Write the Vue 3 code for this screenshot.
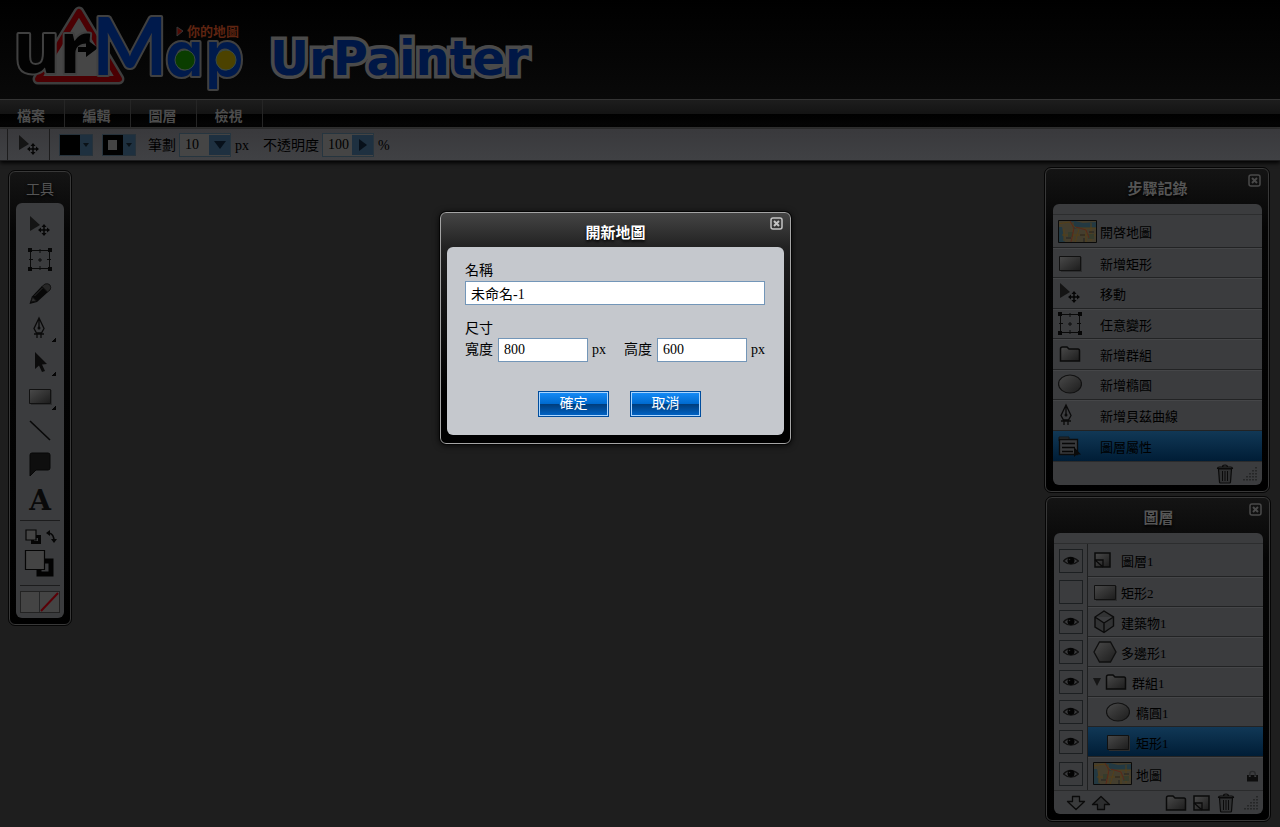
<script setup>
import { ref } from 'vue'

const menus = ['檔案', '編輯', '圖層', '檢視']

const tools = [
  { id: 'move', name: '移動' },
  { id: 'transform', name: '任意變形' },
  { id: 'pencil', name: '鉛筆' },
  { id: 'pen', name: '貝茲曲線', more: true },
  { id: 'arrow', name: '選取', more: true },
  { id: 'rect', name: '矩形', more: true },
  { id: 'line', name: '直線' },
  { id: 'bubble', name: '註解' },
  { id: 'letter', name: '文字' }
]

const steps = [
  { icon: 'map', text: '開啓地圖' },
  { icon: 'rect', text: '新增矩形' },
  { icon: 'move', text: '移動' },
  { icon: 'transform', text: '任意變形' },
  { icon: 'folder', text: '新增群組' },
  { icon: 'ellipse', text: '新增橢圓' },
  { icon: 'pen', text: '新增貝茲曲線' },
  { icon: 'props', text: '圖層屬性' }
]

const layers = ref([
  { icon: 'page', text: '圖層1', visible: true },
  { icon: 'rect', text: '矩形2', visible: false },
  { icon: 'cube', text: '建築物1', visible: true },
  { icon: 'hexagon', text: '多邊形1', visible: true },
  { icon: 'folder', text: '群組1', visible: true, kind: 'group' },
  { icon: 'ellipse', text: '橢圓1', visible: true, kind: 'child' },
  { icon: 'rect', text: '矩形1', visible: true, kind: 'child' },
  { icon: 'map', text: '地圖', visible: true, kind: 'base' }
])

const activeStep = ref(7)
const activeLayer = ref(6)
const stroke = ref('10')
const opacity = ref('100')
const mapName = ref('未命名-1')
const mapWidth = ref('800')
const mapHeight = ref('600')
</script>

<template>
  <div class="app">
    <svg class="defs" aria-hidden="true">
      <defs>
        <linearGradient id="shade" x1="0" y1="0" x2="1" y2="1">
          <stop offset="0" stop-color="#4a4a4a" />
          <stop offset="1" stop-color="#1c1c1c" />
        </linearGradient>
        <symbol id="i-move" viewBox="0 0 24 24">
          <path d="M2 2 L2 17 L12 11 Z" fill="#141414" />
          <path d="M16 11v10M11 16h10" stroke="#060606" stroke-width="1.5" />
          <path d="M16 10l-2.500 3h5zM16 22l-2.500-3h5zM10 16l3-2.500v5zM22 16l-3-2.500v5z" fill="#060606" />
        </symbol>
        <symbol id="i-transform" viewBox="0 0 24 24">
          <path d="M2.500 2.500h19v18h-19zM12 1v4M12 18v4M1 11.500h4M19 11.500h4M12 10v4M10 12h4" fill="none" stroke="#0a0a0a" />
          <path d="M0 0h4v4H0zM20 0h4v4h-4zM0 19h4v4H0zM20 19h4v4h-4z" fill="#060606" />
        </symbol>
        <symbol id="i-pencil" viewBox="0 0 24 24">
          <path d="M1.500 22 L4 14.500 L14 4 L20 10 L9 20 Z" fill="#070707" />
          <path d="M14 4.500 L17 2 Q20 1 22 3 Q23.500 6 22 8 L19.500 10 Z" fill="#262626" stroke="#111" />
          <path d="M3 20 L4.500 15 L8.500 19 Z" fill="#2c2c2c" stroke="#101010" />
          <path d="M6.500 14 L14.500 6" stroke="#2a2a2a" />
        </symbol>
        <symbol id="i-pen" viewBox="0 0 24 24">
          <path d="M11 2 L6 12.500 L8.500 17 h5 L16 12.500 Z M11 2 V11 M6 18h10 M9 17v5 M13 17v5" fill="none" stroke="#0a0a0a" stroke-width="1.300" />
          <circle cx="11" cy="12" r="1.500" fill="#0a0a0a" />
        </symbol>
        <symbol id="i-arrow" viewBox="0 0 24 24">
          <path d="M7 2 L7 19 L11 15.500 L14 22 L17 21 L14 14.500 L19 14 Z" fill="#0b0b0b" />
        </symbol>
        <symbol id="i-rect" viewBox="0 0 24 24">
          <path d="M3 6h21v15H3z" fill="#2c2d2e" />
          <path d="M1.500 5.500h21v14h-21z" fill="url(#shade)" stroke="#111" />
        </symbol>
        <symbol id="i-line" viewBox="0 0 24 24">
          <path d="M2 3 L22 22" stroke="#080808" stroke-width="1.600" />
        </symbol>
        <symbol id="i-bubble" viewBox="0 0 24 24">
          <path d="M4 1H20Q22 1 22 3V16Q22 18 20 18H8L2 24V3Q2 1 4 1Z" fill="#0e0e0e" stroke="#070707" />
        </symbol>
        <symbol id="i-letter" viewBox="0 0 24 24">
          <text x="12" y="24" text-anchor="middle" font-family="DejaVu Serif" font-weight="700" font-size="28" fill="#090909">A</text>
        </symbol>
        <symbol id="i-folder" viewBox="0 0 24 24">
          <path d="M2.500 19V7Q2.500 5 4.500 5H9L11 7H20Q21.500 7 21.500 9V19Z" fill="url(#shade)" stroke="#0a0a0a" stroke-width="1.500" />
        </symbol>
        <symbol id="i-ellipse" viewBox="0 0 24 24">
          <ellipse cx="12" cy="12" rx="11.500" ry="9" fill="url(#shade)" stroke="#111" stroke-width="1.200" />
        </symbol>
        <symbol id="i-props" viewBox="0 0 24 24">
          <path d="M1 3h10v4H1z" fill="#2a2c2e" stroke="#15181a" />
          <path d="M1.500 5.500h18v15h-18z" fill="#393a3c" stroke="#0c0c0c" stroke-width="1.300" />
          <path d="M4 9.500h13M4 13.500h13M4 17.500h11" stroke="#070707" stroke-width="1.600" />
          <path d="M16 13v10l2.500-2.500H23z" fill="#0a0a0a" />
        </symbol>
        <symbol id="i-page" viewBox="0 0 24 24">
          <path d="M2 5h15v14H2z" fill="url(#shade)" stroke="#0a0a0a" stroke-width="1.500" />
          <path d="M2 12h8v7M2 12l8 7" fill="none" stroke="#0a0a0a" stroke-width="1.300" />
        </symbol>
        <symbol id="i-cube" viewBox="0 0 24 24">
          <path d="M11 1 L20.500 7 V16 L11 22.500 L2 17 V7 Z M2 7 L11 13 L20.500 7 M11 13 V22" fill="#323334" stroke="#0b0b0b" stroke-width="1.400" />
        </symbol>
        <symbol id="i-hexagon" viewBox="0 0 24 24">
          <path d="M6.500 2 H17.500 L23 12 L17.500 22 H6.500 L1 12 Z" fill="url(#shade)" stroke="#0f0f0f" stroke-width="1.300" />
        </symbol>
        <symbol id="i-map" viewBox="0 0 39 23">
          <path d="M0 0h39v23H0z" fill="#443e2e" />
          <path d="M0 7h4l3 16H0zM13 0l12 3 14-1v6H24l-9 1z" fill="#233942" />
          <path d="M0 4l11-2 7 6h21M15 2v19M21 9l-4 14M6 9v12M28 9v14M33 3v18M4 15h34" stroke="#554019" fill="none" />
          <path d="M10 12h5v5h-5zM30 14h6v5h-6z" fill="#363c2c" />
          <path d="M12 1l4 7-3 14M18 7l10 3 3 8" stroke="#5a281b" fill="none" />
          <path d="M8 18h5M22 15h5M26 18v4M31 12h5" stroke="#222" />
          <path d="M.5.5h38v22H.5z" fill="none" stroke="#0a0a0a" />
        </symbol>
        <symbol id="i-eye" viewBox="0 0 16 12">
          <path d="M.5 6 Q7-1 15.500 6 Q8 12.500 .5 6Z" fill="#3c3d3f" stroke="#101010" stroke-width="1.200" />
          <circle cx="8" cy="5.500" r="3.500" fill="#030303" />
          <circle cx="6.500" cy="4.500" r=".8" fill="#2c2c2c" />
        </symbol>
        <symbol id="i-trash" viewBox="0 0 18 20">
          <path d="M2.500 5h13l-1 13q0 1-1 1h-9q-1 0-1-1z" fill="#303132" stroke="#0a0a0a" stroke-width="1.200" />
          <path d="M6.500 7v10M9 7v10M11.500 7v10" stroke="#0a0a0a" />
          <path d="M1.500 4.500q0-1.500 2-1.500h11q2 0 2 1.500zM6.500 3q0-2 2.500-2t2.500 2" fill="#353637" stroke="#0a0a0a" stroke-width="1.200" />
        </symbol>
        <symbol id="i-down" viewBox="0 0 20 16">
          <path d="M6.500 1.500h7v5H18.500l-8.500 8-8.500-8h5z" fill="#3a3b3c" stroke="#0a0a0a" stroke-width="1.300" stroke-linejoin="round" />
        </symbol>
        <symbol id="i-up" viewBox="0 0 20 16">
          <path d="M6.500 14.500h7v-5H18.500l-8.500-8-8.500 8h5z" fill="#2d2e2f" stroke="#0a0a0a" stroke-width="1.300" stroke-linejoin="round" />
        </symbol>
        <symbol id="i-grip" viewBox="0 0 15 15">
          <path d="M13 1v14M10 4v11M7 7v8M4 10v5M1 13v2" stroke="#202122" stroke-width="1.500" stroke-dasharray="1.500 1.500" />
        </symbol>
        <symbol id="i-lock" viewBox="0 0 12 14">
          <path d="M3 7V5q0-3 3-3t3 3v2" fill="none" stroke="#292a2b" stroke-width="1.500" />
          <path d="M0 6h2v2h2V6h4v2h2V6h2v7H0z" fill="#0d0d0d" />
        </symbol>
        <symbol id="i-close" viewBox="0 0 13 13">
          <rect x="1" y="1" width="11" height="11" rx="2" fill="none" stroke="currentColor" stroke-width="1.500" />
          <path d="M4 4l5 5M9 4l-5 5" stroke="currentColor" stroke-width="2" />
        </symbol>
      </defs>
    </svg>

    <header class="brand">
      <svg class="logo" viewBox="0 0 250 98" width="250" height="98" role="img" aria-label="urMap 你的地圖">
        <g stroke-linejoin="round">
          <path d="M79 11 L119 78 H38 Z" fill="#464646" stroke="#3d3d3d" stroke-width="11" />
          <path d="M79 11 L119 78 H38 Z" fill="#464646" stroke="#4b0003" stroke-width="6" />
          <g class="edge" fill="#020202">
            <text class="ur" x="13" y="72" font-size="72">u</text>
            <text class="ur" x="59" y="72" font-size="72">r</text>
          </g>
          <path d="M78 46 H86 V38 L98 47 L86 56 V51 H78 Z" fill="#020202" />
          <g class="edge" fill="#001a4c">
            <text x="92" y="74" font-family="Lato" font-weight="700" font-size="80">M</text>
            <text class="round" x="165" y="75" font-size="62">a</text>
            <text class="round" x="205" y="75" font-size="62">p</text>
          </g>
          <circle cx="185" cy="59" r="10" fill="#0a3d00" stroke="#394a40" />
          <circle cx="226" cy="59" r="10" fill="#4c4200" stroke="#394a40" />
          <path d="M177 26 L183 30 L177 35 Z" fill="#510b05" stroke="#363636" />
          <text class="slogan" x="187" y="35" font-size="13">你的地圖</text>
        </g>
      </svg>
      <h1>UrPainter</h1>
    </header>

    <nav class="menubar">
      <button v-for="m in menus" :key="m" type="button">{{ m }}</button>
    </nav>

    <div class="options">
      <button class="current" type="button" aria-label="移動"><svg width="24" height="24"><use href="#i-move" /></svg></button>
      <button class="swatch fill" type="button" aria-label="填色"><i></i><b></b></button>
      <button class="swatch line" type="button" aria-label="線條色"><i></i><b></b></button>
      <label for="stroke">筆劃</label>
      <span class="combo">
        <input id="stroke" v-model="stroke" type="text">
        <button type="button" aria-label="筆劃寬度"><svg width="12" height="8"><path d="M0 0h12L6 8z" /></svg></button>
      </span>
      <span class="unit">px</span>
      <label for="opacity" class="second">不透明度</label>
      <span class="combo">
        <input id="opacity" v-model="opacity" type="text">
        <button type="button" aria-label="調整不透明度"><svg width="8" height="12"><path d="M0 0l8 6-8 6z" /></svg></button>
      </span>
      <span class="unit">%</span>
    </div>

    <main class="workspace">
      <aside class="panel toolbox">
        <h2>工具</h2>
        <div class="body">
          <button v-for="t in tools" :key="t.id" class="tool" type="button" :aria-label="t.name">
            <svg width="24" height="24"><use :href="'#i-' + t.id" /></svg>
            <i v-if="t.more" class="more"></i>
          </button>
          <div class="colors">
            <svg width="36" height="52" viewBox="0 0 36 52" role="img" aria-label="顏色">
              <path d="M8.500 8.500h7v6h-7z" fill="none" stroke="#050505" stroke-width="3" />
              <path d="M2 2h10v10H2z" fill="#444" stroke="#050505" stroke-width="1.200" />
              <path d="M25 5q5 1 5 8" fill="none" stroke="#060606" stroke-width="1.500" />
              <path d="M22 5l4-3v6zM27 11h6l-3 4z" fill="#060606" />
              <path d="M15 33h12v13H15z" fill="none" stroke="#020202" stroke-width="5" />
              <path d="M1.500 22.500h19v19h-19z" fill="#444" stroke="#050505" stroke-width="1.200" />
            </svg>
          </div>
          <div class="modes">
            <button type="button" aria-label="單色"></button>
            <button type="button" aria-label="無色"><svg width="19" height="20"><path d="M1 19L18 1" stroke="#5a0007" stroke-width="2" /></svg></button>
          </div>
        </div>
      </aside>

      <div class="side">
        <section class="panel history">
          <h2>步驟記錄</h2>
          <button class="close" type="button" aria-label="關閉步驟記錄"><svg width="13" height="13"><use href="#i-close" /></svg></button>
          <div class="body">
            <ul class="list">
              <li v-for="(s, i) in steps" :key="s.text">
                <button class="row" :class="{ active: i === activeStep }" type="button" @click="activeStep = i">
                  <svg :class="s.icon"><use :href="'#i-' + s.icon" /></svg>
                  <span>{{ s.text }}</span>
                </button>
              </li>
            </ul>
            <footer>
              <button type="button" aria-label="刪除步驟"><svg width="18" height="20"><use href="#i-trash" /></svg></button>
              <svg class="grip" width="15" height="15"><use href="#i-grip" /></svg>
            </footer>
          </div>
        </section>

        <section class="panel layers">
          <h2>圖層</h2>
          <button class="close" type="button" aria-label="關閉圖層"><svg width="13" height="13"><use href="#i-close" /></svg></button>
          <div class="body">
            <ul class="list">
              <li v-for="(l, i) in layers" :key="l.text">
                <button class="eye" type="button" :aria-label="'顯示' + l.text" @click="l.visible = !l.visible">
                  <svg v-if="l.visible" width="16" height="12"><use href="#i-eye" /></svg>
                </button>
                <button class="row" :class="[l.kind, { active: i === activeLayer }]" type="button" @click="activeLayer = i">
                  <i v-if="l.kind === 'group'" class="open"></i>
                  <svg :class="l.icon"><use :href="'#i-' + l.icon" /></svg>
                  <span>{{ l.text }}</span>
                  <svg v-if="l.kind === 'base'" class="lock" viewBox="0 0 12 14"><use href="#i-lock" /></svg>
                </button>
              </li>
            </ul>
            <footer>
              <button type="button" aria-label="下移"><svg width="20" height="16"><use href="#i-down" /></svg></button>
              <button class="up" type="button" aria-label="上移"><svg width="20" height="16"><use href="#i-up" /></svg></button>
              <button type="button" aria-label="新增群組"><svg width="24" height="24"><use href="#i-folder" /></svg></button>
              <button class="new" type="button" aria-label="新增圖層"><svg width="20" height="24" viewBox="0 0 20 24"><use href="#i-page" width="24" height="24" /></svg></button>
              <button type="button" aria-label="刪除圖層"><svg width="18" height="20"><use href="#i-trash" /></svg></button>
              <svg class="grip" width="15" height="15"><use href="#i-grip" /></svg>
            </footer>
          </div>
        </section>
      </div>
    </main>

    <form class="panel dialog" role="dialog" aria-labelledby="dialog-title" @submit.prevent>
      <h2 id="dialog-title">開新地圖</h2>
      <button class="close" type="button" aria-label="關閉"><svg width="13" height="13"><use href="#i-close" /></svg></button>
      <div class="body">
        <label for="map-name">名稱</label>
        <input id="map-name" v-model="mapName" type="text">
        <p>尺寸</p>
        <div class="size">
          <label for="map-width">寬度</label>
          <input id="map-width" v-model="mapWidth" type="text">
          <span>px</span>
          <label for="map-height" class="second">高度</label>
          <input id="map-height" v-model="mapHeight" type="text">
          <span>px</span>
        </div>
        <div class="actions">
          <button type="submit">確定</button>
          <button type="button">取消</button>
        </div>
      </div>
    </form>
  </div>
</template>

<style>
body { margin: 0; background: #1e1e1e; }
</style>

<style scoped>
* { box-sizing: border-box; }
.app {
  position: relative;
  display: flex;
  flex-direction: column;
  min-height: 100vh;
  background: #1e1e1e;
  color: #000;
  font: 14px/20px "Liberation Serif", "Noto Sans CJK TC", serif;
}
.defs { position: absolute; width: 0; height: 0; }
button { margin: 0; padding: 0; border: 0; background: none; color: inherit; font: inherit; }
input { min-width: 0; margin: 0; color: inherit; font: inherit; outline: 0; }
svg { display: block; flex: none; }
h1, h2, p, ul { margin: 0; padding: 0; font-weight: 400; list-style: none; }

.brand {
  display: flex;
  align-items: center;
  gap: 20px;
  height: 99px;
  background: linear-gradient(#000, #090909);
}
.logo { overflow: visible; }
.edge text { stroke: #404040; stroke-width: 4px; paint-order: stroke; }
.ur { font-family: "Open Sans", sans-serif; font-weight: 700; }
.round { font-family: Inter, sans-serif; font-weight: 600; font-feature-settings: "cv11"; }
.slogan { font-family: "Noto Sans CJK TC", sans-serif; font-weight: 700; fill: #5e2411; }
h1 {
  padding-top: 16px;
  color: #001746;
  font: 700 48px/64px "DejaVu Sans", sans-serif;
  -webkit-text-stroke: 7px #4a4a4a;
  paint-order: stroke fill;
}

.menubar {
  display: flex;
  height: 30px;
  border-top: 1px solid #343434;
  border-bottom: 2px solid #303030;
  background: linear-gradient(#1d1d1d, #141414 50%, #000 51%, #050505);
}
.menubar button {
  width: 66px;
  padding: 2px 2px 0 0;
  border-right: 1px solid #252525;
  color: #4c4c4c;
  font: 700 14px/20px "Noto Sans CJK TC", sans-serif;
}
.menubar button:first-child { width: 65px; }

.options {
  display: flex;
  align-items: center;
  height: 32px;
  padding-left: 7px;
  border-bottom: 1px solid #1d1d1e;
  background: linear-gradient(#39393c, #404144);
  box-shadow: 0 2px 4px #000;
}
.current { display: grid; place-items: center; align-self: stretch; width: 43px; margin-right: 9px; border: solid #1c1c1d; border-width: 0 1px; }
.swatch { display: flex; width: 34px; height: 22px; margin-right: 9px; border: 1px solid #26323b; background: #444; }
.swatch i { width: 22px; height: 20px; background: #000; }
.swatch.line i { border: 5px solid #000; border-right-width: 6px; background: #444; }
.swatch b { flex: 1; height: 20px; background: #1e303f; }
.swatch b::after { content: ""; display: block; margin: 8px 3px; border: solid transparent; border-width: 4px 3px 0; border-top-color: #0a1117; }
.options label { margin: 0 3px; padding-top: 2px; }
.options .second { margin-left: 14px; }
.combo { display: flex; height: 24px; border: 1px solid #26353f; background: #444; }
.combo input { width: 29px; padding: 1px 0 0 5px; border: 0; background: #454545; font-size: 14px; }
.combo button { display: grid; place-items: center; width: 21px; margin: 1px 0; background: #1e3040; fill: #07101a; }
.unit { margin-left: 4px; padding-top: 2px; }

.workspace { display: flex; justify-content: space-between; align-items: flex-start; flex: 1; padding: 7px 10px 5px 9px; }
.panel {
  position: relative;
  padding: 0 6px 6px;
  border: 1px solid #383838;
  border-radius: 6px;
  outline: 1px solid #050505;
  background: linear-gradient(#141414, #050505 60px, #000);
}
.panel h2 {
  height: 35px;
  color: #555;
  font: 700 15px/38px "Noto Sans CJK TC", sans-serif;
  text-align: center;
  text-shadow: 0 2px 3px #000;
}
.panel .body { border-radius: 6px; background: #3b3c3e; }
.close { position: absolute; top: 5px; right: 7px; color: #494949; }

.toolbox { width: 62px; margin-top: 3px; }
.toolbox h2 { height: 31px; font-size: 14px; font-weight: 400; line-height: 33px; }
.toolbox .body { display: flex; flex-direction: column; padding: 6px 4px 5px; }
.tool { position: relative; display: grid; place-items: center; height: 34px; }
.more { position: absolute; right: 4px; bottom: 3px; width: 4px; height: 4px; background: linear-gradient(135deg, transparent 50%, #050505 50%); }
.colors { margin-top: 5px; padding: 7px 0 5px 4px; border-top: 1px solid #1c1c1d; border-bottom: 1px solid #1c1c1d; }
.modes { display: flex; margin-top: 5px; border: 1px solid #222; background: #444; }
.modes button { flex: 1; height: 20px; }
.modes button + button { border-left: 1px solid #252627; }

.side { display: flex; flex-direction: column; gap: 5px; width: 225px; }
.side .panel { width: 224px; padding-left: 7px; }
.layers { align-self: flex-end; }
.history .body, .layers .body { padding-top: 10px; }
.list { display: flex; flex-direction: column; height: 248px; border-top: 1px solid #2c2d2e; border-bottom: 1px solid #2a2b2c; }
.list li { display: flex; flex: 1; min-height: 0; }
.list li:first-child { flex: 0 0 33px; }
.layers .list li:last-child { flex: 0 0 33px; }
.row { display: flex; flex: 1; align-items: center; min-width: 0; border-bottom: 1px solid #222324; box-shadow: 0 1px #454648; text-align: left; font-size: 13px; }
.list li:last-child .row { border-bottom: 0; box-shadow: none; }
.row.active { background: linear-gradient(#113856, #001d36); }
.row svg { width: 24px; height: 24px; }
.row .map { width: 39px; height: 23px; }
.row span { padding-top: 4px; }
.history .row { padding-left: 5px; }
.history .row span { margin-left: auto; width: 162px; }
.history .pen { margin-left: -3px; }
.row .lock { width: 11px; height: 14px; margin: 4px 5px 0 auto; }

.eye { display: grid; place-items: center; align-self: center; width: 24px; height: 24px; margin: 0 4px 0 5px; border: 1px solid #1c1f21; }
.layers .row { padding-left: 5px; border-left: 1px solid #1f2021; }
.layers .row span { margin-left: 4px; }
.layers .child { padding-left: 18px; }
.layers .child span { margin-left: 6px; }
.layers .group { padding-left: 5px; }
.open { margin-right: 3px; border: solid transparent; border-width: 8px 4px 0; border-top-color: #151515; }

footer { display: flex; align-items: center; justify-content: flex-end; height: 23px; padding-right: 4px; }
.grip { margin-left: 9px; }
.layers footer button:first-child { margin-left: 12px; }
.layers .up { margin: 0 auto 0 5px; }
.new { margin: 0 5px 0 4px; }

.dialog {
  position: absolute;
  top: 212px;
  left: 440px;
  width: 351px;
  padding: 0 6px 8px;
  border-color: #a4a4a4;
  background: linear-gradient(#444, #222 34px, #1c1c1c 50px, #000 180px);
  box-shadow: 0 1px 7px #000;
}
.dialog h2 { height: 34px; color: #fff; }
.dialog .close { top: 4px; color: #c4c4c4; }
.dialog .body { padding: 14px 19px 18px 18px; background: #c5c8cd; }
.dialog .body > label, .dialog p { display: block; height: 20px; line-height: 20px; }
.dialog input { height: 24px; padding: 0 5px; border: 1px solid #7396b8; background: #fff; }
.dialog .body > input { display: block; width: 100%; }
.dialog p { margin-top: 14px; }
.size { display: flex; align-items: center; margin-top: -1px; }
.size input { flex: 1; margin: 0 4px 0 5px; }
.size .second { margin-left: 18px; }
.actions { display: flex; justify-content: center; gap: 21px; margin: 29px 0 0 9px; }
.actions button {
  width: 71px;
  height: 26px;
  border: 1px solid #004d9d;
  background: linear-gradient(#168cf8, #006bd0 48%, #003e7e 52%, #0065c9);
  box-shadow: inset 0 0 0 1px #a9d5ff;
  color: #fff;
}
</style>
